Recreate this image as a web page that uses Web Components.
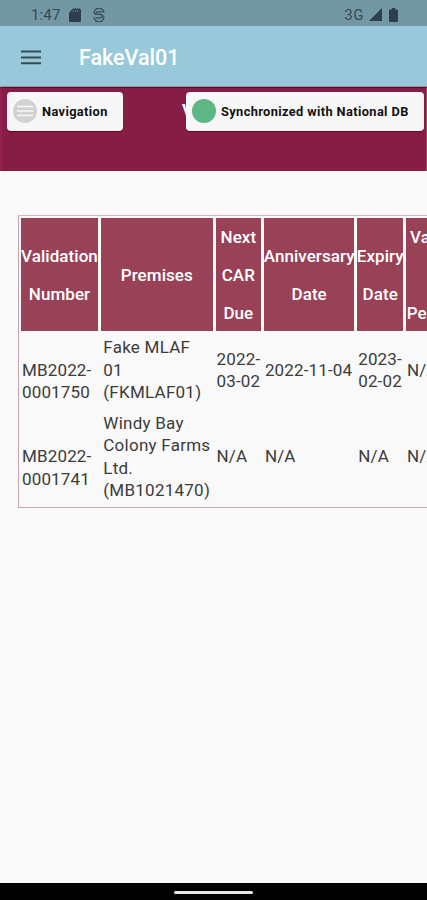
<!DOCTYPE html>
<html lang="en">
<head>
<meta charset="utf-8">
<title>FakeVal01</title>
<style>
  html, body {
    margin: 0;
    height: 100%;
    overflow: hidden;
    background: #f9f9f9;
    font-family: Roboto, "Liberation Sans", sans-serif;
  }
</style>
</head>
<body>
<phone-screen>
  <status-bar slot="top" time="1:47" network="3G"></status-bar>
  <app-bar slot="top">FakeVal01</app-bar>
  <page-banner header="V">
    <status-chip slot="left" icon="menu">Navigation</status-chip>
    <status-chip slot="right" icon="dot">Synchronized with National DB</status-chip>
  </page-banner>
  <data-table>
    <head-cell>Validation<br>Number</head-cell>
    <head-cell>Premises</head-cell>
    <head-cell>Next<br>CAR<br>Due</head-cell>
    <head-cell>Anniversary<br>Date</head-cell>
    <head-cell>Expiry<br>Date</head-cell>
    <head-cell>Value<br><br>Period</head-cell>

    <data-cell offset>MB2022-<br>0001750</data-cell>
    <data-cell wide>Fake MLAF<br>01<br>(FKMLAF01)</data-cell>
    <data-cell>2022-<br>03-02</data-cell>
    <data-cell>2022-11-04</data-cell>
    <data-cell>2023-<br>02-02</data-cell>
    <data-cell>N/A</data-cell>

    <data-cell offset>MB2022-<br>0001741</data-cell>
    <data-cell wide>Windy Bay<br>Colony Farms<br>Ltd.<br>(MB1021470)</data-cell>
    <data-cell>N/A</data-cell>
    <data-cell>N/A</data-cell>
    <data-cell>N/A</data-cell>
    <data-cell>N/A</data-cell>
  </data-table>
  <gesture-bar slot="bottom"></gesture-bar>
</phone-screen>

<script>
// small base so each element only has to give its markup
class BaseElement extends HTMLElement {
  constructor() {
    super();
    const tmpl = document.createElement("template");
    tmpl.innerHTML = this.constructor.markup;
    this.attachShadow({ mode: "open" }).appendChild(tmpl.content.cloneNode(true));
  }
}

class PhoneScreen extends BaseElement {
  static get markup() {
    return `
      <style>
      :host {
        display: flex;
        flex-direction: column;
        width: 427px;
        height: 900px;
        overflow: hidden;
      }
      main {
        flex: 1;
        min-height: 0;
        overflow: hidden;
      }
      </style>
      <slot name="top"></slot>
      <main><slot></slot></main>
      <slot name="bottom"></slot>
    `;
  }
}

class StatusBar extends BaseElement {
  static get markup() {
    return `
      <style>
      :host {
        display: flex;
        align-items: center;
        box-sizing: border-box;
        flex: none;
        height: 26px;
        padding: 3px 29px 0 31px;
        background: #7397a3;
        color: #34495a;
        font-size: 15px;
      }
      .time { width: 38px; letter-spacing: .15px; }
      .network { margin-left: auto; margin-right: 5px; letter-spacing: .5px; }
      svg { display: block; fill: #2d3f4e; }
      .card { margin-right: 12px; }
      .signal { margin-right: 7px; }
      </style>
      <span class="time"></span>
      <svg class="card" width="12" height="14" viewBox="0 0 12 14">
        <path d="M4 .5h6.500Q12 .5 12 2v10.500Q12 14 10.500 14h-9Q0 14 0 12.500V4.500z"/>
        <path d="M4.300 2v2M6.600 2v2M8.900 2v2" stroke="#7397a3" stroke-width=".7"/>
      </svg>
      <svg class="sync" width="12" height="14" viewBox="0 0 12 14" style="fill:none;stroke:#34495a;stroke-width:1.200">
        <path d="M1 5.500A5 5 0 0 1 11 5M1 9a5 5 0 0 0 10-.5M9.200 3.800H4.300Q3 3.800 3 5t1.300 1.400h3.500Q9.200 6.400 9.200 8T7.800 9.800H2.800M1 5.500l2 1M11 8.500l-2-1"/>
      </svg>
      <span class="network"></span>
      <svg class="signal" width="13" height="13" viewBox="0 0 13 13"><path d="M13 0v13H0z"/></svg>
      <svg class="battery" width="9" height="14" viewBox="0 0 9 14">
        <path d="M2.800 0h3.400v1.500H8q1 0 1 1V13q0 1-1 1H1q-1 0-1-1V2.500q0-1 1-1h1.800z"/>
      </svg>
    `;
  }

  connectedCallback() {
    this.shadowRoot.querySelector(".time").textContent = this.getAttribute("time");
    this.shadowRoot.querySelector(".network").textContent = this.getAttribute("network");
  }
}

class AppBar extends BaseElement {
  static get markup() {
    return `
      <style>
      :host {
        display: flex;
        align-items: center;
        box-sizing: border-box;
        flex: none;
        height: 61px;
        padding: 2px 0 0 21px;
        gap: 38px;
        background: #98c9da;
        border-bottom: 1px solid #8298a9;
        color: #fff;
        font-size: 21.500px;
        font-weight: 500;
      }
      svg { display: block; }
      </style>
      <svg width="20" height="15" viewBox="0 0 20 15">
        <path d="M0 1.500h20M0 7.500h20M0 13.300h20" stroke="#354a55" stroke-width="2"/>
      </svg>
      <span><slot></slot></span>
    `;
  }
}

class PageBanner extends BaseElement {
  static get markup() {
    return `
      <style>
      :host {
        display: block;
        position: relative;
        box-sizing: border-box;
        height: 84px;
        background: #851d44;
        border-top: 1px solid #700025;
        border-left: 2px solid #982050;
        border-right: 1px solid #a04a6c;
      }
      h1 {
        margin: 0;
        padding: 12px 0 0 180px;
        color: #fff;
        font-size: 17px;
        line-height: 20px;
      }
      /* the chips float over the banner title */
      .chips {
        position: absolute;
        top: 4px;
        left: 5px;
        right: 2px;
        display: flex;
        justify-content: space-between;
      }
      </style>
      <h1></h1>
      <div class="chips">
        <slot name="left"></slot>
        <slot name="right"></slot>
      </div>
    `;
  }

  connectedCallback() {
    this.shadowRoot.querySelector("h1").textContent = this.getAttribute("header");
  }
}

class StatusChip extends BaseElement {
  static get markup() {
    return `
      <style>
      :host {
        display: flex;
        align-items: center;
        box-sizing: border-box;
        height: 39px;
        width: 116px;
        padding: 0 0 1px 6px;
        gap: 5px;
        border-radius: 4px;
        background: #f7f7f7;
        color: #111;
        font-size: 12.800px;
        font-weight: 700;
        letter-spacing: .38px;
        white-space: nowrap;
        box-shadow: 0 1px 1px #700018;
      }
      :host([icon="dot"]) { width: 238px; }
      svg { display: block; flex: none; }
      .lines { stroke: #f7f7f7; stroke-width: 1.300; }
      circle { fill: #d2d2d2; }
      :host([icon="dot"]) circle { fill: #5db683; }
      :host([icon="dot"]) .lines { display: none; }
      </style>
      <svg width="24" height="24" viewBox="0 0 24 24">
        <circle cx="12" cy="12" r="12"/>
        <path class="lines" d="M4 7.500h16M4 12h16M4 16.500h16"/>
      </svg>
      <span><slot></slot></span>
    `;
  }
}

class DataTable extends BaseElement {
  static get markup() {
    return `
      <style>
      :host {
        display: grid;
        grid-template-columns: 77px 112px 45.500px 90.500px 46px 51px;
        grid-template-rows: 113px 74px 97px;
        column-gap: 2.800px;
        row-gap: 1px;
        box-sizing: border-box;
        width: 450px;
        height: 293px;
        margin: 44px 0 0 18px;
        padding: 2px;
        border: 1px solid #c9a3af;
        border-top-color: #cdb9bf;
      }
      </style>
      <slot></slot>
    `;
  }
}

class HeadCell extends BaseElement {
  static get markup() {
    return `
      <style>
      :host {
        display: flex;
        align-items: center;
        justify-content: center;
        padding-top: 3px;
        background: #994257;
        color: #fff;
        font-size: 17px;
        font-weight: 500;
        line-height: 37.700px;
        letter-spacing: .05px;
        text-align: center;
        white-space: nowrap;
      }
      </style>
      <div><slot></slot></div>
    `;
  }
}

class DataCell extends BaseElement {
  static get markup() {
    return `
      <style>
      :host {
        display: flex;
        align-items: center;
        padding: 2px 0 0 1px;
        color: #3c3c3c;
        font-size: 17px;
        line-height: 22.400px;
        letter-spacing: .15px;
        white-space: nowrap;
      }
      :host([offset]) { padding-top: 24.400px; }
      :host([wide]) { padding-left: 2.500px; letter-spacing: .25px; }
      </style>
      <div><slot></slot></div>
    `;
  }
}

class GestureBar extends BaseElement {
  static get markup() {
    return `
      <style>
      :host {
        display: flex;
        align-items: center;
        justify-content: center;
        box-sizing: border-box;
        flex: none;
        height: 17px;
        padding-top: 2px;
        background: #000;
      }
      span {
        width: 79px;
        height: 3px;
        border-radius: 2px;
        background: #e8e8e8;
      }
      </style>
      <span></span>
    `;
  }
}

window.customElements.define("phone-screen", PhoneScreen);
window.customElements.define("status-bar", StatusBar);
window.customElements.define("app-bar", AppBar);
window.customElements.define("page-banner", PageBanner);
window.customElements.define("status-chip", StatusChip);
window.customElements.define("data-table", DataTable);
window.customElements.define("head-cell", HeadCell);
window.customElements.define("data-cell", DataCell);
window.customElements.define("gesture-bar", GestureBar);
</script>
</body>
</html>
